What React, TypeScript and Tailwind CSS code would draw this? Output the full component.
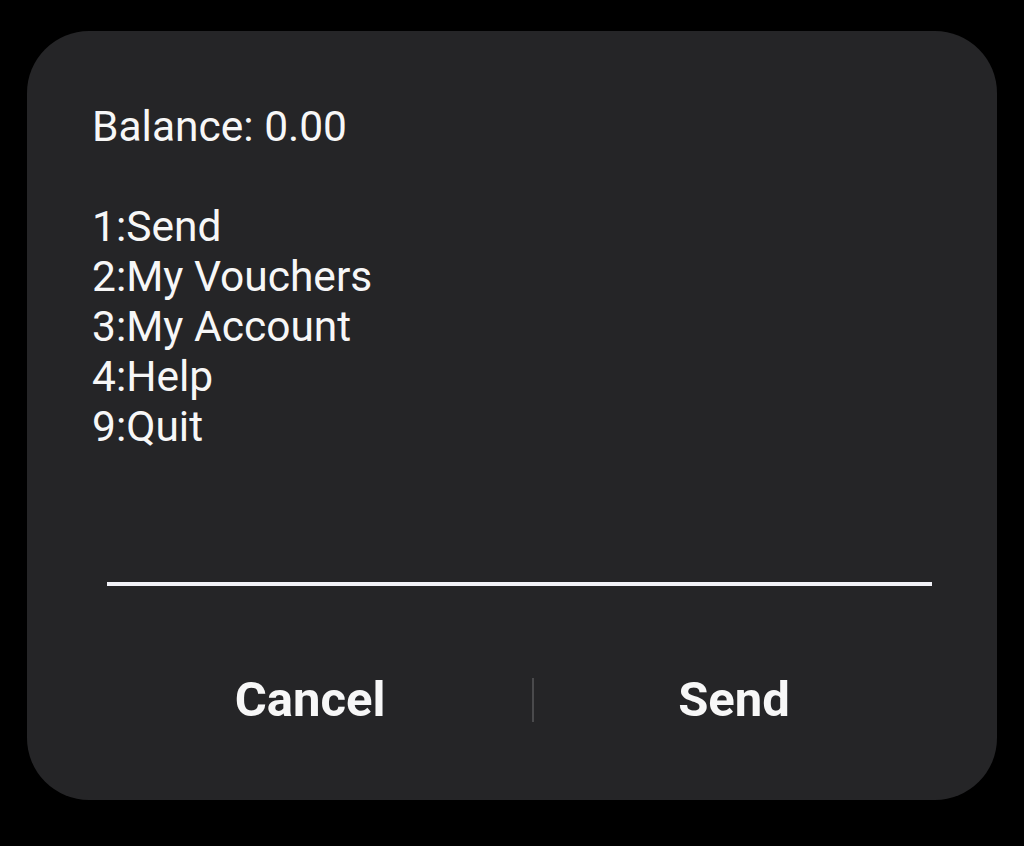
export default function App() {
  const lines = ["Balance: 0.00", "\u00a0", "1:Send", "2:My Vouchers", "3:My Account", "4:Help", "9:Quit"];
  return (
    <div className="w-[1024px] h-[846px] bg-black pt-[31px] pl-[27px]" style={{ fontFamily: "Roboto, 'Noto Sans', sans-serif" }}>
      <div className="w-[970px] h-[769px] rounded-[62px] bg-[#252527] flex flex-col">
        <div className="pl-[65px] pt-[71px] text-[42.5px] leading-[50px] text-[#f7f7f7]">
          {lines.map((l, i) => (
            <div key={i}>{l}</div>
          ))}
        </div>
        <div className="ml-[80px] mt-[130px] w-[825px] h-[4px] bg-[#f2f2f7]" />
        <div className="mt-[64px] flex items-center h-[100px] pl-[61px]">
          <div className="w-[444px] flex justify-center text-[49px] font-bold text-[#f7f7f7]">Cancel</div>
          <div className="w-[2px] h-[44px] bg-[#4a4a4c]" />
          <div className="w-[400px] flex justify-center text-[49px] font-bold text-[#f7f7f7]">Send</div>
        </div>
      </div>
    </div>
  );
}
